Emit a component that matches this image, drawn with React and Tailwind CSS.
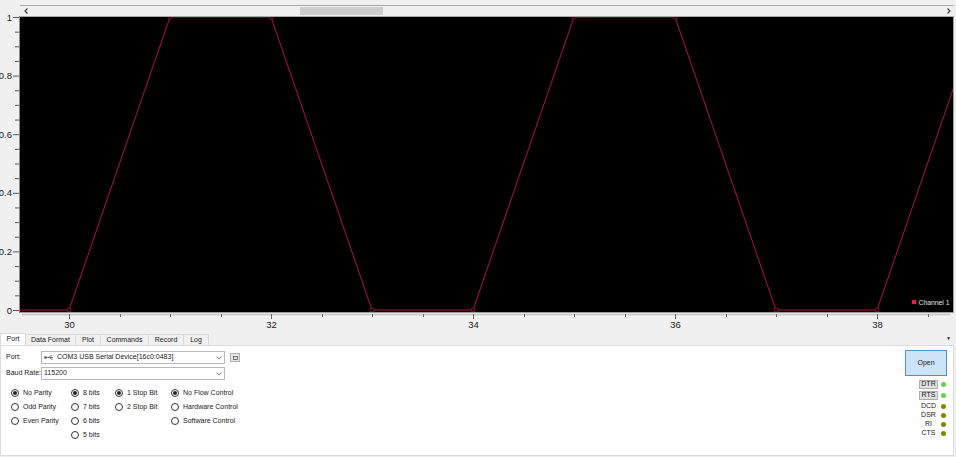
import React from "react";

const X = (t) => 49 + 101 * (t - 30);
const Y = (v) => 293 - 293 * v;

const data = [
  [28, 1], [29, 0], [30, 0], [31, 1], [32, 1], [33, 0], [34, 0],
  [35, 1], [36, 1], [37, 0], [38, 0], [39, 1], [40, 1],
];

function YAxis() {
  const ticks = [];
  for (let i = 0; i <= 20; i++) {
    const v = i * 0.05;
    const y = 310 - 293 * v + 0.5;
    const major = i % 4 === 0;
    ticks.push(
      <line key={i} x1={major ? 13 : 15} x2={19} y1={y} y2={y} stroke="#555" strokeWidth="1" />
    );
  }
  const labels = ["0", "0.2", "0.4", "0.6", "0.8", "1"];
  return (
    <svg width="20" height="333" className="shrink-0">
      {ticks}
      {labels.map((l, i) => (
        <text key={l} x="12" y={310 - 293 * i * 0.2 + 3.5} fontSize="9.5" textAnchor="end" fill="#222">
          {l}
        </text>
      ))}
      <line x1="19.5" x2="19.5" y1="16" y2="313" stroke="#8a8a8a" />
    </svg>
  );
}

function Plot() {
  const pts = data.map(([t, v]) => `${X(t)},${Y(v)}`).join(" ");
  const ticks = [];
  for (let t = 29.5; t <= 39; t += 0.5) {
    const x = Math.round(X(t)) + 0.5;
    if (x < 0 || x > 930) continue;
    const major = t % 2 === 0;
    ticks.push(<line key={t} x1={x} x2={x} y1="297" y2={major ? 302 : 300} stroke="#666" />);
    if (major)
      ticks.push(
        <text key={"l" + t} x={x} y="311" fontSize="9.5" textAnchor="middle" fill="#222">
          {t}
        </text>
      );
  }
  return (
    <svg width="936" height="316" className="block">
      <defs>
        <clipPath id="pc">
          <rect x="0" y="0" width="933" height="295" />
        </clipPath>
      </defs>
      <rect x="0" y="0" width="933" height="295" fill="#000" />
      <g clipPath="url(#pc)">
        <polyline points={pts} fill="none" stroke="#b0104a" strokeWidth="1" />
        {data.map(([t, v]) => (
          <circle key={t} cx={X(t)} cy={Y(v)} r="2" fill="#000" stroke="#b0104a" strokeWidth="0.8" />
        ))}
        <rect x="892" y="283" width="4" height="4" fill="#ff1050" />
        <text x="898.5" y="287.8" fontSize="6.8" fill="#e0e0e0">Channel 1</text>
      </g>
      <line x1="933.5" x2="933.5" y1="0" y2="296" stroke="#a0a0a0" />
      <line x1="0" x2="933" y1="295.5" y2="295.5" stroke="#9a9a9a" />
      <line x1="2" x2="930" y1="297.5" y2="297.5" stroke="#c4c4c4" strokeWidth="1.5" />
      {ticks}
    </svg>
  );
}

function Scrollbar() {
  return (
    <div className="mt-[5px] h-[12px] w-[934px] border-t border-b border-[#a9a9a9] bg-[#f0f0f0] flex items-stretch">
      <div className="w-[12px] flex items-center justify-center">
        <svg width="5" height="6"><path d="M3.5 0.5 L1 3 L3.5 5.5" fill="none" stroke="#444" strokeWidth="1.2" /></svg>
      </div>
      <div className="w-[268px]" />
      <div className="w-[83px] bg-[#cdcdcd] my-[1px]" />
      <div className="flex-1" />
      <div className="w-[12px] flex items-center justify-center">
        <svg width="5" height="6"><path d="M1.5 0.5 L4 3 L1.5 5.5" fill="none" stroke="#444" strokeWidth="1.2" /></svg>
      </div>
    </div>
  );
}

function Chevron() {
  return (
    <svg width="6" height="4" className="mr-[2px] shrink-0">
      <path d="M0.5 0.5 L3 3 L5.5 0.5" fill="none" stroke="#777" strokeWidth="0.9" />
    </svg>
  );
}

function Combo({ children }) {
  return (
    <div className="w-[184px] h-[13px] shrink-0 border border-[#b8b8b8] bg-white flex items-center pl-[2px]">
      <div className="flex-1 flex items-center gap-[3px] whitespace-nowrap overflow-hidden">{children}</div>
      <Chevron />
    </div>
  );
}

function Radio({ label, checked }) {
  return (
    <div className="h-[14px] flex items-center">
      <div className="w-[8px] h-[8px] rounded-full border border-[#333] bg-white flex items-center justify-center shrink-0">
        {checked && <div className="w-[4px] h-[4px] rounded-full bg-[#222]" />}
      </div>
      <span className="ml-[4px] whitespace-nowrap">{label}</span>
    </div>
  );
}

function Status({ label, boxed, on }) {
  return (
    <div className={`h-[9px] flex items-center justify-end gap-[3px] ${boxed ? "mb-[2px]" : ""}`}>
      <div
        className={
          boxed
            ? "w-[19px] h-[9px] border border-[#adadad] bg-[#e1e1e1] flex items-center justify-center"
            : "w-[19px] h-[9px] flex items-center justify-center"
        }
      >
        {label}
      </div>
      <div className={on ? "w-[5px] h-[5px] rounded-full bg-[#62d34a] mr-[1px]" : "w-[5px] h-[5px] rounded-full bg-[#858500] mr-[1px]"} />
    </div>
  );
}

const tabs = [
  ["Port", "w-[26px]"],
  ["Data Format", "w-[50px]"],
  ["Plot", "w-[25px]"],
  ["Commands", "w-[48px]"],
  ["Record", "w-[35px]"],
  ["Log", "w-[25px]"],
];

export default function App() {
  return (
    <div className="w-[956px] h-[457px] overflow-hidden bg-[#f0f0f0] flex flex-col font-['Liberation_Sans',Arial,sans-serif] text-[7px] text-[#1a1a1a]">
      {/* chart */}
      <div className="flex h-[333px] shrink-0">
        <YAxis />
        <div className="flex flex-col">
          <Scrollbar />
          <Plot />
        </div>
      </div>

      {/* tabs */}
      <div className="h-[12px] flex items-stretch shrink-0">
        {tabs.map(([t, w], i) => (
          <div
            key={t}
            className={
              i === 0
                ? `${w} bg-white border-t border-l border-r border-[#d9d9d9] flex items-center justify-center`
                : `${w} bg-[#f0f0f0] border-t border-r border-[#d9d9d9] mt-[1px] flex items-center justify-center`
            }
          >
            {t}
          </div>
        ))}
        <div className="flex-1" />
        <div className="mr-[5px] flex items-center text-[5px]">▼</div>
      </div>

      {/* port panel */}
      <div className="flex-1 bg-white border border-[#dcdcdc] mr-[2px] mb-[1px] flex">
        <div className="flex-1 pl-[5px] pt-[5px]">
          <div className="flex items-center h-[13px]">
            <span className="w-[35px] shrink-0 whitespace-nowrap">Port:</span>
            <Combo>
              <svg width="10" height="5" className="shrink-0">
                <circle cx="1.5" cy="2.5" r="1.3" fill="#555" />
                <path d="M2.5 2.5 H9 M5 2.5 L6.5 0.8 H8 M6 2.5 L7 4.2 H8.5" fill="none" stroke="#555" strokeWidth="0.8" />
              </svg>
              <span>COM3 USB Serial Device[16c0:0483]</span>
            </Combo>
            <div className="ml-[5px] w-[10px] h-[9px] border border-[#b0b0b0] bg-[#e6e6e6] flex items-center justify-center">
              <svg width="5" height="4">
                <rect x="0.5" y="0.5" width="4" height="3" fill="none" stroke="#555" strokeWidth="0.8" />
              </svg>
            </div>
          </div>
          <div className="flex items-center h-[13px] mt-[3px]">
            <span className="w-[35px] shrink-0 whitespace-nowrap">Baud Rate:</span>
            <Combo>
              <span>115200</span>
            </Combo>
          </div>

          <div className="flex mt-[6px] ml-[5px]">
            <div className="w-[60px]">
              <Radio label="No Parity" checked />
              <Radio label="Odd Parity" />
              <Radio label="Even Parity" />
            </div>
            <div className="w-[44px]">
              <Radio label="8 bits" checked />
              <Radio label="7 bits" />
              <Radio label="6 bits" />
              <Radio label="5 bits" />
            </div>
            <div className="w-[56px]">
              <Radio label="1 Stop Bit" checked />
              <Radio label="2 Stop Bit" />
            </div>
            <div>
              <Radio label="No Flow Control" checked />
              <Radio label="Hardware Control" />
              <Radio label="Software Control" />
            </div>
          </div>
        </div>

        <div className="pt-[4px] pr-[6px] flex flex-col">
          <div className="w-[42px] h-[26px] bg-[#cce4f7] border border-[#4a90d0] flex items-center justify-center">
            Open
          </div>
          <div className="mt-[4px] flex flex-col">
            <Status label="DTR" boxed on />
            <Status label="RTS" boxed on />
            <Status label="DCD" />
            <Status label="DSR" />
            <Status label="RI" />
            <Status label="CTS" />
          </div>
        </div>
      </div>
    </div>
  );
}
